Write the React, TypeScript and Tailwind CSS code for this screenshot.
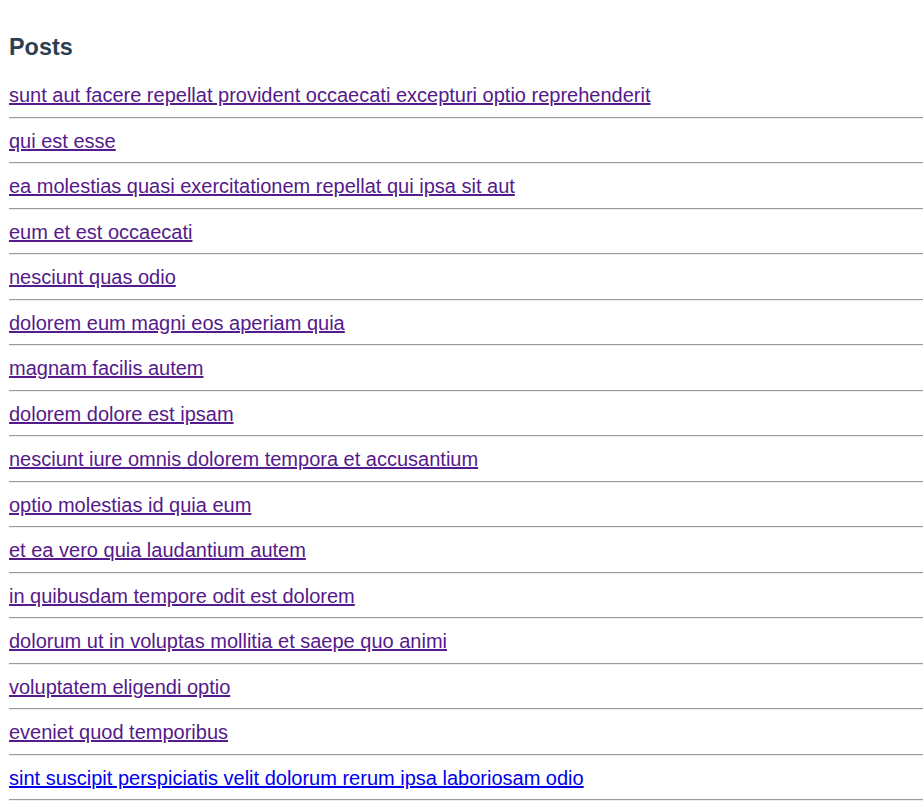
import React from "react";

const posts = [
  "sunt aut facere repellat provident occaecati excepturi optio reprehenderit",
  "qui est esse",
  "ea molestias quasi exercitationem repellat qui ipsa sit aut",
  "eum et est occaecati",
  "nesciunt quas odio",
  "dolorem eum magni eos aperiam quia",
  "magnam facilis autem",
  "dolorem dolore est ipsam",
  "nesciunt iure omnis dolorem tempora et accusantium",
  "optio molestias id quia eum",
  "et ea vero quia laudantium autem",
  "in quibusdam tempore odit est dolorem",
  "dolorum ut in voluptas mollitia et saepe quo animi",
  "voluptatem eligendi optio",
  "eveniet quod temporibus",
  "sint suscipit perspiciatis velit dolorum rerum ipsa laboriosam odio",
];

export default function App() {
  return (
    <div className="min-h-[806px] bg-white pl-[9px] font-['Liberation_Sans',Arial,sans-serif]">
      <h2 className="pt-[33px] text-[23.4px] font-bold leading-[28px] text-[#2c3e50]">Posts</h2>
      <ul className="mt-[23px]">
        {posts.map((t, i) => (
          <li key={i}>
            <a
              href="#"
              className={`block w-fit text-[20px] leading-[23px] underline ${
                i === posts.length - 1 ? "text-[#0000ee]" : "text-[#551a8b]"
              }`}
            >
              {t}
            </a>
            <div className="mt-[9.5px] mb-[11px] border-t border-b border-t-[#9a9a9a] border-b-[#eeeeee]" />
          </li>
        ))}
      </ul>
    </div>
  );
}
